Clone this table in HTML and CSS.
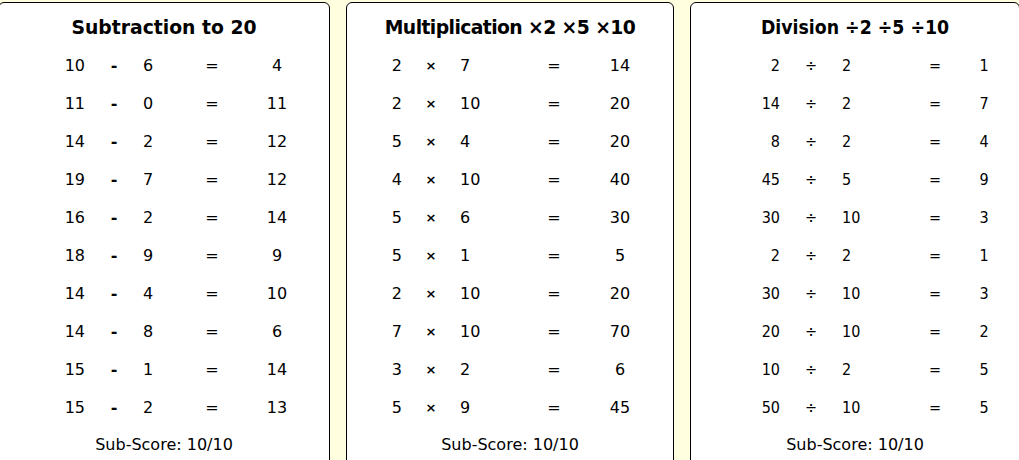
FILE: index.html
```html
<!DOCTYPE html>
<html>
<head>
<meta charset="utf-8">
<link rel="stylesheet" href="styles.css">
</head>
<body>
<div class="board">
  <section class="card card-sub">
    <h2 class="title">Subtraction to 20</h2>
    <div class="rows">
      <div class="row"><span class="a">10</span><span class="op">-</span><span class="b">6</span><span class="eq">=</span><span class="ans">4</span></div>
      <div class="row"><span class="a">11</span><span class="op">-</span><span class="b">0</span><span class="eq">=</span><span class="ans">11</span></div>
      <div class="row"><span class="a">14</span><span class="op">-</span><span class="b">2</span><span class="eq">=</span><span class="ans">12</span></div>
      <div class="row"><span class="a">19</span><span class="op">-</span><span class="b">7</span><span class="eq">=</span><span class="ans">12</span></div>
      <div class="row"><span class="a">16</span><span class="op">-</span><span class="b">2</span><span class="eq">=</span><span class="ans">14</span></div>
      <div class="row"><span class="a">18</span><span class="op">-</span><span class="b">9</span><span class="eq">=</span><span class="ans">9</span></div>
      <div class="row"><span class="a">14</span><span class="op">-</span><span class="b">4</span><span class="eq">=</span><span class="ans">10</span></div>
      <div class="row"><span class="a">14</span><span class="op">-</span><span class="b">8</span><span class="eq">=</span><span class="ans">6</span></div>
      <div class="row"><span class="a">15</span><span class="op">-</span><span class="b">1</span><span class="eq">=</span><span class="ans">14</span></div>
      <div class="row"><span class="a">15</span><span class="op">-</span><span class="b">2</span><span class="eq">=</span><span class="ans">13</span></div>
    </div>
    <p class="score">Sub-Score: 10/10</p>
  </section>
  <section class="card card-mul">
    <h2 class="title">Multiplication ×2 ×5 ×10</h2>
    <div class="rows">
      <div class="row"><span class="a">2</span><span class="op">×</span><span class="b">7</span><span class="eq">=</span><span class="ans">14</span></div>
      <div class="row"><span class="a">2</span><span class="op">×</span><span class="b">10</span><span class="eq">=</span><span class="ans">20</span></div>
      <div class="row"><span class="a">5</span><span class="op">×</span><span class="b">4</span><span class="eq">=</span><span class="ans">20</span></div>
      <div class="row"><span class="a">4</span><span class="op">×</span><span class="b">10</span><span class="eq">=</span><span class="ans">40</span></div>
      <div class="row"><span class="a">5</span><span class="op">×</span><span class="b">6</span><span class="eq">=</span><span class="ans">30</span></div>
      <div class="row"><span class="a">5</span><span class="op">×</span><span class="b">1</span><span class="eq">=</span><span class="ans">5</span></div>
      <div class="row"><span class="a">2</span><span class="op">×</span><span class="b">10</span><span class="eq">=</span><span class="ans">20</span></div>
      <div class="row"><span class="a">7</span><span class="op">×</span><span class="b">10</span><span class="eq">=</span><span class="ans">70</span></div>
      <div class="row"><span class="a">3</span><span class="op">×</span><span class="b">2</span><span class="eq">=</span><span class="ans">6</span></div>
      <div class="row"><span class="a">5</span><span class="op">×</span><span class="b">9</span><span class="eq">=</span><span class="ans">45</span></div>
    </div>
    <p class="score">Sub-Score: 10/10</p>
  </section>
  <section class="card card-div">
    <h2 class="title">Division ÷2 ÷5 ÷10</h2>
    <div class="rows">
      <div class="row"><span class="a">2</span><span class="op">÷</span><span class="b">2</span><span class="eq">=</span><span class="ans">1</span></div>
      <div class="row"><span class="a">14</span><span class="op">÷</span><span class="b">2</span><span class="eq">=</span><span class="ans">7</span></div>
      <div class="row"><span class="a">8</span><span class="op">÷</span><span class="b">2</span><span class="eq">=</span><span class="ans">4</span></div>
      <div class="row"><span class="a">45</span><span class="op">÷</span><span class="b">5</span><span class="eq">=</span><span class="ans">9</span></div>
      <div class="row"><span class="a">30</span><span class="op">÷</span><span class="b">10</span><span class="eq">=</span><span class="ans">3</span></div>
      <div class="row"><span class="a">2</span><span class="op">÷</span><span class="b">2</span><span class="eq">=</span><span class="ans">1</span></div>
      <div class="row"><span class="a">30</span><span class="op">÷</span><span class="b">10</span><span class="eq">=</span><span class="ans">3</span></div>
      <div class="row"><span class="a">20</span><span class="op">÷</span><span class="b">10</span><span class="eq">=</span><span class="ans">2</span></div>
      <div class="row"><span class="a">10</span><span class="op">÷</span><span class="b">2</span><span class="eq">=</span><span class="ans">5</span></div>
      <div class="row"><span class="a">50</span><span class="op">÷</span><span class="b">10</span><span class="eq">=</span><span class="ans">5</span></div>
    </div>
    <p class="score">Sub-Score: 10/10</p>
  </section>
</div>
</body>
</html>
```
FILE: styles.css
```css
html, body {
  margin: 0;
  padding: 0;
  overflow: hidden;
  background: #ffffe0;
}

body {
  font-family: "DejaVu Sans", sans-serif;
  color: #000;
}

.board {
  display: flex;
  gap: 16px;
  padding-top: 2px;
  margin-left: -2px;
}

.card {
  flex: none;
  box-sizing: border-box;
  height: 480px;
  background: #fff;
  border: 1px solid #000;
  border-radius: 6px;
}

.card-sub { width: 332px; --pad: 46px; --cols: 40px 58px 49px 40px 90px; }
.card-mul { width: 328px; --pad: 15px; --cols: 40px 58px 74px 40px 92px; }
.card-div { width: 330px; --pad: 49px; --cols: 40px 62px 73px 40px 58px; }

.title {
  margin: 0;
  padding-top: 12px;
  font-size: 18.8px;
  line-height: 26px;
  font-weight: bold;
  text-align: center;
}

.card-mul .title {
  letter-spacing: -0.6px;
}

.card-div .title {
  font-family: "DejaVu Sans Condensed", "DejaVu Sans", sans-serif;
  font-size: 19.3px;
}

.rows {
  margin-top: 6px;
  padding-left: var(--pad);
}

.row {
  display: grid;
  grid-template-columns: var(--cols);
  height: 38px;
  align-items: center;
  font-size: 16px;
  line-height: 20px;
}

.card-div .row {
  font-family: "DejaVu Sans Condensed", "DejaVu Sans", sans-serif;
  font-size: 16px;
}

.a { text-align: right; }
.op { text-align: center; font-weight: bold; }
.b { text-align: left; }
.eq { text-align: center; }
.ans { text-align: center; }

.card-mul .op { font-size: 13px; }
.card-div .op { font-weight: normal; }

.score {
  margin: 5px 0 0;
  font-size: 16px;
  line-height: 26px;
  text-align: center;
}
```
